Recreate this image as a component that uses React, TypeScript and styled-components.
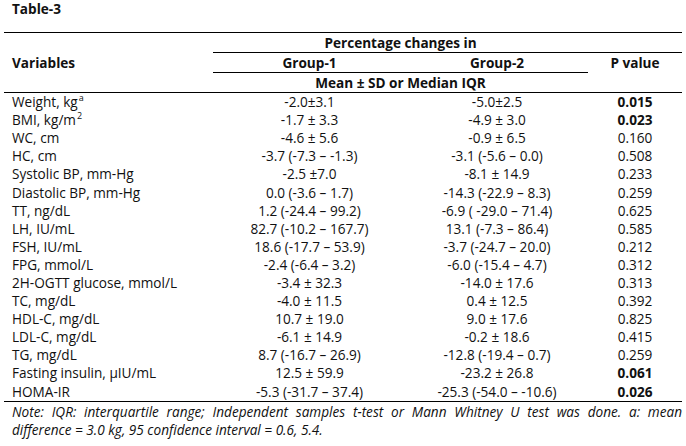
import React from 'react';
import styled, { createGlobalStyle } from 'styled-components';

const GlobalStyle = createGlobalStyle`
  html, body {
    margin: 0;
    padding: 0;
    background: #ffffff;
  }
  body {
    font-family: 'Open Sans', 'Liberation Sans', sans-serif;
    color: #111111;
  }
`;

const Page = styled.div`
  width: 686px;
  height: 446px;
  padding: 0 4px;
  box-sizing: border-box;
  overflow: hidden;
`;

const Title = styled.div`
  font-weight: 700;
  font-size: 13.6px;
  line-height: 18px;
  padding-left: 8px;
  height: 32px;
`;

const Table = styled.table`
  width: 678px;
  border-collapse: collapse;
  table-layout: fixed;
  font-size: 13.6px;
  border-top: 1px solid #000;
`;

const HeadCell = styled.th<{ $line?: boolean; $left?: boolean }>`
  font-weight: 700;
  padding: 0;
  height: 19px;
  line-height: 19px;
  text-align: ${(p) => (p.$left ? 'left' : 'center')};
  padding-left: ${(p) => (p.$left ? '8px' : '0')};
  border-bottom: ${(p) => (p.$line ? '1px solid #000' : 'none')};
  white-space: nowrap;
`;

const HeadRow = styled.tr<{ $last?: boolean }>`
  border-bottom: ${(p) => (p.$last ? '1px solid #000' : 'none')};
`;

const Row = styled.tr<{ $last?: boolean }>`
  border-bottom: ${(p) => (p.$last ? '1px solid #000' : 'none')};
`;

const Cell = styled.td<{ $left?: boolean; $bold?: boolean }>`
  padding: 0;
  height: 18.1px;
  line-height: 18px;
  text-align: ${(p) => (p.$left ? 'left' : 'center')};
  padding-left: ${(p) => (p.$left ? '8px' : '0')};
  font-weight: ${(p) => (p.$bold ? 700 : 400)};
  white-space: nowrap;
`;

const Sup = styled.sup`
  font-size: 9px;
  line-height: 0;
  vertical-align: 6px;
  margin-left: 1px;
`;

const Note = styled.div`
  padding: 1px 0 0 8px;
  font-style: italic;
  font-size: 13.6px;
  line-height: 18px;
`;

const NoteLine = styled.div<{ $justify?: boolean }>`
  text-align: ${(p) => (p.$justify ? 'justify' : 'left')};
  text-align-last: ${(p) => (p.$justify ? 'justify' : 'left')};
  white-space: nowrap;
`;

type Item = {
  name: React.ReactNode;
  g1: string;
  g2: string;
  p: string;
  bold?: boolean;
};

const rows: Item[] = [
  { name: <>Weight, kg<Sup>a</Sup></>, g1: '-2.0±3.1', g2: '-5.0±2.5', p: '0.015', bold: true },
  { name: <>BMI, kg/m<Sup>2</Sup></>, g1: '-1.7 ± 3.3', g2: '-4.9 ± 3.0', p: '0.023', bold: true },
  { name: 'WC, cm', g1: '-4.6 ± 5.6', g2: '-0.9 ± 6.5', p: '0.160' },
  { name: 'HC, cm', g1: '-3.7 (-7.3 – -1.3)', g2: '-3.1 (-5.6 – 0.0)', p: '0.508' },
  { name: 'Systolic BP, mm-Hg', g1: '-2.5 ±7.0', g2: '-8.1 ± 14.9', p: '0.233' },
  { name: 'Diastolic BP, mm-Hg', g1: '0.0 (-3.6 – 1.7)', g2: '-14.3 (-22.9 – 8.3)', p: '0.259' },
  { name: 'TT, ng/dL', g1: '1.2 (-24.4 – 99.2)', g2: '-6.9 ( -29.0 – 71.4)', p: '0.625' },
  { name: 'LH, IU/mL', g1: '82.7 (-10.2 – 167.7)', g2: '13.1 (-7.3 – 86.4)', p: '0.585' },
  { name: 'FSH, IU/mL', g1: '18.6 (-17.7 – 53.9)', g2: '-3.7 (-24.7 – 20.0)', p: '0.212' },
  { name: 'FPG, mmol/L', g1: '-2.4 (-6.4 – 3.2)', g2: '-6.0 (-15.4 – 4.7)', p: '0.312' },
  { name: '2H-OGTT glucose, mmol/L', g1: '-3.4 ± 32.3', g2: '-14.0 ± 17.6', p: '0.313' },
  { name: 'TC, mg/dL', g1: '-4.0 ± 11.5', g2: '0.4 ± 12.5', p: '0.392' },
  { name: 'HDL-C, mg/dL', g1: '10.7 ± 19.0', g2: '9.0 ± 17.6', p: '0.825' },
  { name: 'LDL-C, mg/dL', g1: '-6.1 ± 14.9', g2: '-0.2 ± 18.6', p: '0.415' },
  { name: 'TG, mg/dL', g1: '8.7 (-16.7 – 26.9)', g2: '-12.8 (-19.4 – 0.7)', p: '0.259' },
  { name: 'Fasting insulin, µIU/mL', g1: '12.5 ± 59.9', g2: '-23.2 ± 26.8', p: '0.061', bold: true },
  { name: 'HOMA-IR', g1: '-5.3 (-31.7 – 37.4)', g2: '-25.3 (-54.0 – -10.6)', p: '0.026', bold: true },
];

export default function App() {
  return (
    <Page>
      <GlobalStyle />
      <Title>Table-3</Title>
      <Table>
        <colgroup>
          <col style={{ width: 209 }} />
          <col style={{ width: 193 }} />
          <col style={{ width: 182 }} />
          <col style={{ width: 94 }} />
        </colgroup>
        <thead>
          <HeadRow>
            <HeadCell rowSpan={3} $left>
              Variables
            </HeadCell>
            <HeadCell colSpan={2} $line>
              Percentage changes in
            </HeadCell>
            <HeadCell $line />
          </HeadRow>
          <HeadRow>
            <HeadCell $line>Group-1</HeadCell>
            <HeadCell $line>Group-2</HeadCell>
            <HeadCell>P value</HeadCell>
          </HeadRow>
          <HeadRow $last>
            <HeadCell colSpan={2}>Mean ± SD or Median IQR</HeadCell>
            <HeadCell />
          </HeadRow>
        </thead>
        <tbody>
          {rows.map((r, i) => (
            <Row key={i} $last={i === rows.length - 1}>
              <Cell $left>{r.name}</Cell>
              <Cell>{r.g1}</Cell>
              <Cell>{r.g2}</Cell>
              <Cell $bold={r.bold}>{r.p}</Cell>
            </Row>
          ))}
        </tbody>
      </Table>
      <Note>
        <NoteLine $justify>
          Note: IQR: interquartile range; Independent samples t-test or Mann Whitney U test was done. a: mean
        </NoteLine>
        <NoteLine>difference = 3.0 kg, 95 confidence interval = 0.6, 5.4.</NoteLine>
      </Note>
    </Page>
  );
}
